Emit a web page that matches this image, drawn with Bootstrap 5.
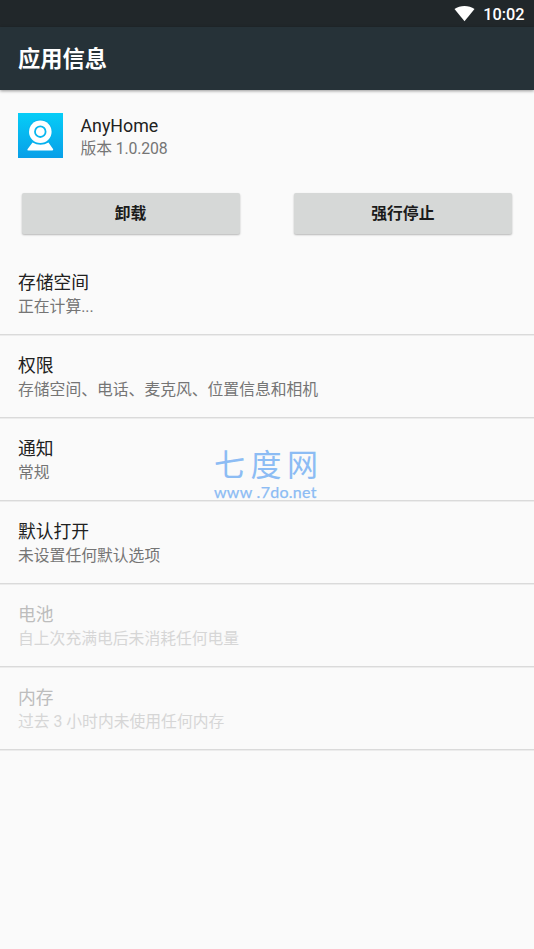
<!DOCTYPE html>
<html lang="zh-CN">
<head>
<meta charset="utf-8">
<meta name="viewport" content="width=device-width, initial-scale=1">
<title>应用信息</title>
<link href="https://cdn.jsdelivr.net/npm/bootstrap@5.3.0/dist/css/bootstrap.min.css" rel="stylesheet">
<style>
body{font-family:Roboto,"Noto Sans CJK SC",sans-serif;background:#fafafa;color:#212121;min-height:100vh;overflow:hidden}
.statusbar{height:27px;background:#21272a;font-size:16.3px;line-height:27px;padding:2px 9.5px 0 0;gap:8px}
.statusbar svg{margin-top:-3px}
.appbar{height:63px;background:#263238;font-size:22.25px;line-height:65px;padding-left:18px;box-shadow:0 1px 3px rgba(0,0,0,.4)}
.app-head{height:103px;padding:23px 18px 0;gap:17.5px}
.title-line{font-size:17.8px;line-height:24px}
.sub-line{font-size:15.8px;line-height:22px;color:#757575}
.app-text{padding-top:1px}
.app-text .sub-line{letter-spacing:-.12px}
.actions{padding:0 22px 0 21.5px;gap:54px;height:59px}
.action-btn{--bs-btn-bg:#d6d8d7;--bs-btn-color:#1b1b1b;height:41px;border:0;border-radius:2px;font-size:15.8px;line-height:42px;padding:0;box-shadow:0 1px 2px rgba(0,0,0,.28)}
.list-group-flush > .list-group-item.setting{height:83px;padding:19px 18px 0;border:0;background:transparent;color:#212121;box-shadow:inset 0 -1px #dadada,0 1px #ececec}
.list-group-flush > .list-group-item.setting.off{color:#bdbdbd}
.setting.off .sub-line{color:#d6d6d6}
.setting .sub-line{margin-top:1px}
.watermark{left:214px;top:448px;color:#8cbcf4}
.wm-name{font-size:31px;line-height:35px;letter-spacing:5.5px;height:35px}
.wm-url{font-family:Lato,sans-serif;font-size:16px;line-height:17px;letter-spacing:.28px;-webkit-text-stroke:.25px #8cbcf4}
</style>
</head>
<body>
<div class="statusbar d-flex justify-content-end align-items-center text-white fw-medium">
  <svg width="21" height="17" viewBox="0 0 21 17"><path d="M.5 4C6-.1 15-.1 20.500 4L10.500 16.200Z" fill="#fff"/></svg>
  <span>10:02</span>
</div>
<header class="appbar text-white fw-bold position-relative">应用信息</header>
<main>
  <section class="app-head d-flex align-items-start">
    <svg width="45" height="45" viewBox="0 0 45 45">
      <defs><linearGradient id="sky" x2="0" y2="1"><stop stop-color="#06cdf7"/><stop offset="1" stop-color="#089fe8"/></linearGradient></defs>
      <path fill="url(#sky)" d="M0 0h45v45H0z"/>
      <path fill="#fff" d="M14.500 29.500Q22.500 34 30.500 29.500L35.200 36.200Q35.400 37.400 34 37.400H10.500Q8.800 37.400 9.500 36.200Z"/>
      <circle cx="22.300" cy="18.700" r="12.200" fill="#07b5ef"/>
      <circle cx="22.300" cy="18.700" r="11.300" fill="#fff"/>
      <circle cx="22.300" cy="18.700" r="5.300" fill="none" stroke="#08b7ef" stroke-width="1.800"/>
    </svg>
    <div class="app-text">
      <div class="title-line">AnyHome</div>
      <div class="sub-line">版本 1.0.208</div>
    </div>
  </section>
  <section class="actions d-flex">
    <button class="btn action-btn flex-fill w-50 fw-bold">卸载</button>
    <button class="btn action-btn flex-fill w-50 fw-bold">强行停止</button>
  </section>
  <div class="list-group list-group-flush">
    <div class="list-group-item setting"><div class="title-line">存储空间</div><div class="sub-line">正在计算...</div></div>
    <div class="list-group-item setting"><div class="title-line">权限</div><div class="sub-line">存储空间、电话、麦克风、位置信息和相机</div></div>
    <div class="list-group-item setting"><div class="title-line">通知</div><div class="sub-line">常规</div></div>
    <div class="list-group-item setting"><div class="title-line">默认打开</div><div class="sub-line">未设置任何默认选项</div></div>
    <div class="list-group-item setting off"><div class="title-line">电池</div><div class="sub-line">自上次充满电后未消耗任何电量</div></div>
    <div class="list-group-item setting off"><div class="title-line">内存</div><div class="sub-line">过去 3 小时内未使用任何内存</div></div>
  </div>
</main>
<div class="watermark position-absolute text-nowrap">
  <div class="wm-name">七度网</div>
  <div class="wm-url">www .7do.net</div>
</div>
<script src="https://cdn.jsdelivr.net/npm/bootstrap@5.3.0/dist/js/bootstrap.bundle.min.js"></script>
</body>
</html>
